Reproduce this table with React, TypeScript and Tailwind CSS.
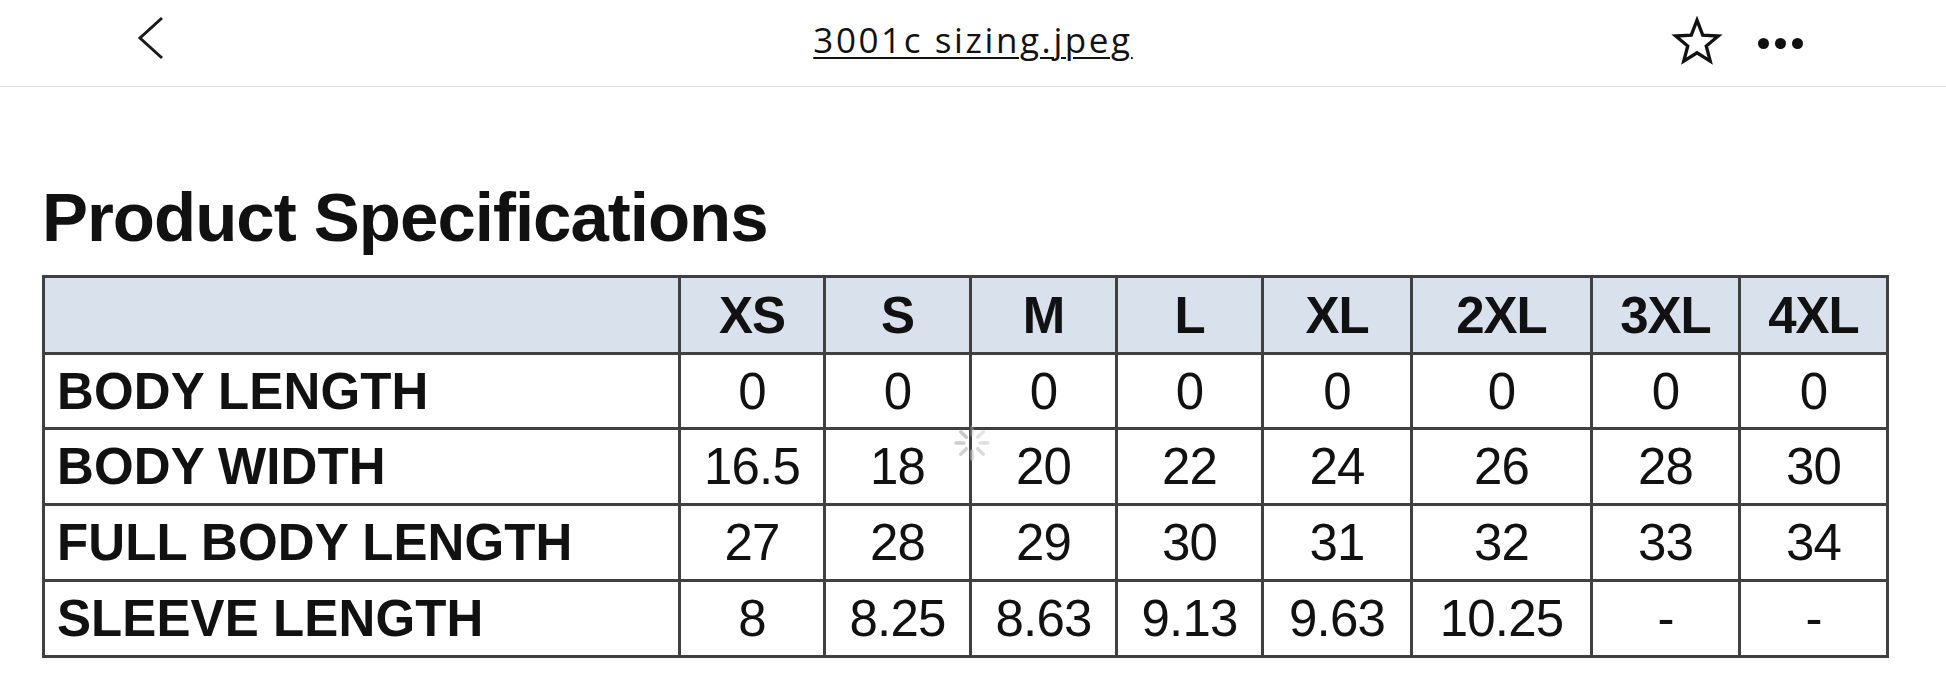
import React from 'react'

const sizes = ['XS', 'S', 'M', 'L', 'XL', '2XL', '3XL', '4XL']

const rows = [
  { label: 'BODY LENGTH', values: ['0', '0', '0', '0', '0', '0', '0', '0'] },
  { label: 'BODY WIDTH', values: ['16.5', '18', '20', '22', '24', '26', '28', '30'] },
  { label: 'FULL BODY LENGTH', values: ['27', '28', '29', '30', '31', '32', '33', '34'] },
  { label: 'SLEEVE LENGTH', values: ['8', '8.25', '8.63', '9.13', '9.63', '10.25', '-', '-'] },
]

const Spinner = () => (
  <svg width="40" height="40" viewBox="0 0 40 40" className="absolute left-[910px] top-[148px]">
    {[0, 45, 90, 135, 180, 225, 270, 315].map((a, i) => (
      <line
        key={a}
        x1="20"
        y1="4"
        x2="20"
        y2="12"
        stroke="#c4c4c4"
        strokeWidth="3.5"
        strokeLinecap="round"
        opacity={0.35 + i * 0.08}
        transform={`rotate(${a} 20 20)`}
      />
    ))}
  </svg>
)

const Header = () => (
  <header className="grid h-[87px] grid-cols-[1fr_auto_1fr] items-center border-b border-[#e2e2de] bg-white">
    <div className="flex items-center">
      <svg width="30" height="48" viewBox="0 0 30 48" className="ml-[136px] -mt-[10px]">
        <polyline points="26,4 4,24 26,44" fill="none" stroke="#1a1a1a" strokeWidth="3" />
      </svg>
    </div>
    <span className="-mt-[7px] font-['Open_Sans',sans-serif] text-[35px] font-medium leading-none tracking-[2.6px] text-[#111] underline decoration-[2px] underline-offset-[4px]">
      3001c sizing.jpeg
    </span>
    <div className="flex items-center justify-end pr-[143px]">
      <svg width="52" height="50" viewBox="0 0 50 48" className="-mt-[4px]">
        <path
          d="M25 4 L30.5 18.3 L45.5 19.2 L33.9 28.8 L37.7 43.4 L25 35.3 L12.3 43.4 L16.1 28.8 L4.5 19.2 L19.5 18.3 Z"
          fill="none"
          stroke="#111"
          strokeWidth="3.2"
          strokeLinejoin="miter"
        />
      </svg>
      <div className="ml-[35px] flex gap-[6px]">
        <span className="h-[11px] w-[11px] rounded-full bg-[#111]" />
        <span className="h-[11px] w-[11px] rounded-full bg-[#111]" />
        <span className="h-[11px] w-[11px] rounded-full bg-[#111]" />
      </div>
    </div>
  </header>
)

const SpecTable = () => (
  <div className="relative w-fit">
    <div className="grid w-fit grid-cols-[633px_142px_143px_143px_143px_146px_177px_145px_145px] grid-rows-[74px_72px_73px_73px_73px] gap-[3px] bg-[#404040] p-[3px] text-[51px] leading-none text-[#111]">
      <div className="bg-[#d8e1ec]" />
      {sizes.map((s) => (
        <div key={s} className="flex items-center justify-center bg-[#d8e1ec] font-bold tracking-[-1px]">
          {s}
        </div>
      ))}
      {rows.map(({ label, values }) => (
        <React.Fragment key={label}>
          <div className="flex items-center bg-white pl-[12px] font-bold tracking-[0.1px]">{label}</div>
          {values.map((v, i) => (
            <div key={i} className="flex items-center justify-center bg-white tracking-[-0.8px]">
              {v}
            </div>
          ))}
        </React.Fragment>
      ))}
    </div>
    <Spinner />
  </div>
)

const App = () => {
  return (
    <div className="min-h-[681px] bg-white font-['Liberation_Sans',Arial,sans-serif]">
      <Header />
      <main className="pl-[42px] pt-[96px]">
        <h1 className="mb-[23px] text-[69px] font-bold leading-none tracking-[-1px] text-[#111]">
          Product Specifications
        </h1>
        <SpecTable />
      </main>
    </div>
  )
}

export default App
